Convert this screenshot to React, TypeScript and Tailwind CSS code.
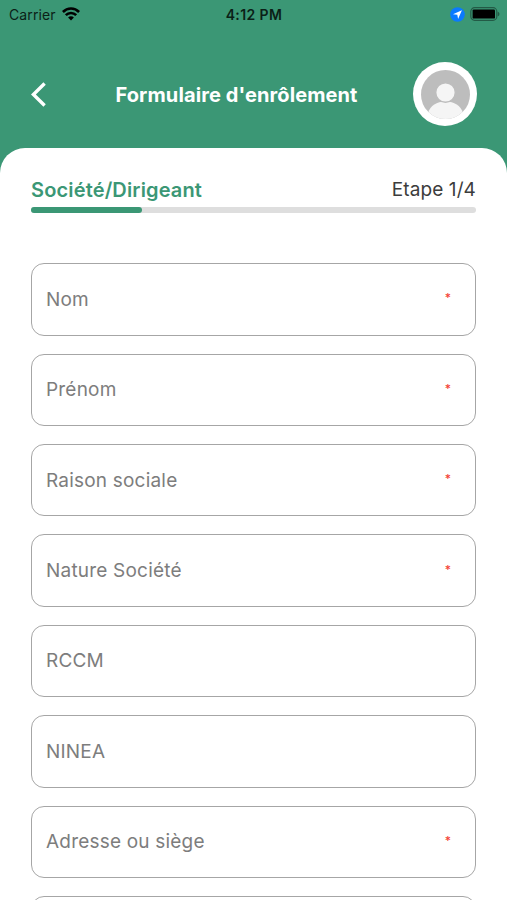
import React from 'react';

interface Field {
  label: string;
  required: boolean;
}

const FIELDS: Field[] = [
  { label: 'Nom', required: true },
  { label: 'Prénom', required: true },
  { label: 'Raison sociale', required: true },
  { label: 'Nature Société', required: true },
  { label: 'RCCM', required: false },
  { label: 'NINEA', required: false },
  { label: 'Adresse ou siège', required: true },
  { label: '', required: false },
];

const StatusBar: React.FC = () => (
  <div className="grid h-7 grid-cols-[1fr_auto_1fr] items-center pl-[9px] pr-[7px] text-[14px] text-[#0b1f17]">
    <div className="flex items-center gap-[6px]">
      <span className="tracking-[0.1px]">Carrier</span>
      <svg width="18" height="14" viewBox="0 0 18 14" fill="none" stroke="#000" strokeWidth="2.6">
        <path d="M0.9 5C5.4 0.4 12.6 0.4 17.1 5" />
        <path d="M3.8 8.2C6.7 5.2 11.3 5.2 14.2 8.2" />
        <path d="M9 13.4L6.1 10.5C7.7 8.9 10.3 8.9 11.9 10.5Z" fill="#000" stroke="none" />
      </svg>
    </div>
    <span className="mr-px text-center font-semibold tracking-[0.4px]">4:12 PM</span>
    <div className="flex items-center justify-end gap-[5px]">
      <svg width="15" height="15" viewBox="0 0 15 15">
        <circle cx="7.5" cy="7.5" r="7.3" fill="#0a7aff" />
        <path d="M11.9 3.3L3 7.2L7.3 7.8L8.1 12.1Z" fill="#fff" />
      </svg>
      <svg width="30" height="14" viewBox="0 0 30 14">
        <rect x="0.8" y="0.7" width="26" height="12.6" rx="3.8" fill="none" stroke="#000" strokeOpacity="0.4" strokeWidth="1.2" />
        <rect x="2.6" y="2.4" width="22.4" height="9.2" rx="1.2" fill="#000" />
        <path d="M27.8 4.7C30 5.4 30 8.6 27.8 9.3Z" fill="#000" fillOpacity="0.4" />
      </svg>
    </div>
  </div>
);

const Avatar: React.FC = () => (
  <div className="flex size-16 items-center justify-center rounded-full bg-white">
    <svg width="49" height="49" viewBox="0 0 49 49">
      <clipPath id="avatar-clip">
        <circle cx="24.5" cy="24.5" r="24.5" />
      </clipPath>
      <g clipPath="url(#avatar-clip)">
        <rect width="49" height="49" fill="#bdbdbd" />
        <path d="M7 43C9.5 35.5 15.5 31.5 24.5 31.5S39.5 35.5 42 43V49H7Z" fill="#f5f5f5" />
        <circle cx="24.5" cy="22.5" r="9.8" fill="#f5f5f5" stroke="#bdbdbd" strokeWidth="1.4" />
      </g>
    </svg>
  </div>
);

const FormField: React.FC<Field> = ({ label, required }) => (
  <div className="flex h-[72.4px] shrink-0 items-center justify-between rounded-[13px] border border-[#a6a6a6] pl-[14px] pr-[24px]">
    <span className="pt-px text-[19px] tracking-[0.2px] text-[#7d7d7d]">{label}</span>
    {required && <span className="pb-[2px] text-[12px] font-medium text-[#f44336]">*</span>}
  </div>
);

const App: React.FC = () => (
  <div className="flex h-[900px] w-[507px] flex-col overflow-hidden bg-[#3b9775] font-['Inter',sans-serif]">
    <StatusBar />
    <header className="flex h-[120px] items-center justify-between pl-[31px] pr-[30px] pt-[12px]">
      <button type="button" aria-label="Retour" className="w-[29px]">
        <svg width="16" height="25" viewBox="0 0 16 25" fill="none" stroke="#fff" strokeWidth="3.4">
          <path d="M13.6 1.5L2.4 12.5L13.6 23.5" />
        </svg>
      </button>
      <h1 className="pt-px text-[20px] font-bold tracking-[0.1px] text-white">Formulaire d'enrôlement</h1>
      <Avatar />
    </header>
    <main className="flex min-h-0 flex-1 flex-col rounded-t-[25px] bg-white px-[31px] pt-[28px]">
      <div className="flex items-center justify-between text-[19px] leading-7">
        <h2 className="text-[20px] font-semibold leading-7 tracking-[0.15px] text-[#3b9775]">Société/Dirigeant</h2>
        <span className="tracking-[0.1px] text-[#3c3c3c]">Etape 1/4</span>
      </div>
      <div className="mt-[3px] h-[6px] shrink-0 rounded-full bg-[#dedede]">
        <div className="h-full w-1/4 rounded-full bg-[#3b9775]" />
      </div>
      <div className="mt-[50.3px] flex min-h-0 flex-1 flex-col gap-[18px] overflow-hidden">
        {FIELDS.map((field, i) => (
          <FormField key={i} label={field.label} required={field.required} />
        ))}
      </div>
    </main>
  </div>
);

export default App;
